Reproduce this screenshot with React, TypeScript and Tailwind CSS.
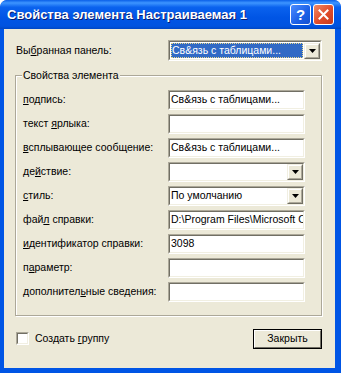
import { ReactNode } from "react";

const Field = ({ children, className = "" }: { children?: ReactNode; className?: string }) => (
    <div className={"border border-[#aca899] border-r-white border-b-white " + className}>
        <div className="h-full border border-[#716f64] border-r-[#f1efe2] border-b-[#f1efe2] bg-white flex items-center overflow-hidden">
            {children}
        </div>
    </div>
);

const DropButton = () => (
    <div className="w-[16px] h-[16px] shrink-0 ml-auto border border-[#f1efe2] border-r-[#716f64] border-b-[#716f64] bg-[#ece9d8] flex items-center justify-center">
        <div className="w-full h-full border border-white border-r-[#aca899] border-b-[#aca899] flex items-center justify-center">
            <svg width="7" height="4" viewBox="0 0 7 4">
                <polygon points="0,0 7,0 3.5,4" fill="#000" />
            </svg>
        </div>
    </div>
);

const Row = ({ label, children }: { label: ReactNode; children: ReactNode }) => (
    <div className="flex items-center h-[20px]">
        <div className="w-[145px] shrink-0 whitespace-nowrap">{label}</div>
        {children}
    </div>
);

const Text = ({ value }: { value?: string }) => (
    <Field className="w-[137px] h-[20px]">
        <span className="pl-[1px] whitespace-nowrap">{value}</span>
    </Field>
);

const Combo = ({ value }: { value?: string }) => (
    <Field className="w-[137px] h-[20px]">
        <span className="pl-[1px] whitespace-nowrap">{value}</span>
        <DropButton />
    </Field>
);

export default function App() {
    return (
        <div className="w-[341px] h-[373px] bg-[#0055e5] rounded-t-[7px] flex flex-col text-[10.5px] text-black font-['Liberation_Sans',Arial,sans-serif] overflow-hidden">
            {/* title bar */}
            <div className="h-[29px] shrink-0 flex items-center pl-[7px] pr-[7px] rounded-t-[7px] bg-[linear-gradient(180deg,#0a5fe8_0%,#3d95ff_10%,#0a62ee_25%,#0055e5_60%,#0053e0_90%,#0046c4_100%)]">
                <span className="text-white font-bold text-[13px] [text-shadow:1px_1px_0_#0a1d6e] whitespace-nowrap">Свойства элемента Настраиваемая 1</span>
                <div className="ml-auto flex gap-[2px]">
                    <div className="w-[21px] h-[21px] rounded-[3px] border border-white bg-[linear-gradient(135deg,#4b8dff,#1a5fe6_60%,#1450d0)] flex items-center justify-center text-white font-bold text-[15px] leading-none">?</div>
                    <div className="w-[21px] h-[21px] rounded-[3px] border border-white bg-[linear-gradient(135deg,#f08a66,#e04c2a_55%,#c73a1c)] flex items-center justify-center">
                        <svg width="11" height="11" viewBox="0 0 11 11">
                            <path d="M1.5 1.5 L9.5 9.5 M9.5 1.5 L1.5 9.5" stroke="#fff" strokeWidth="2" strokeLinecap="square" />
                        </svg>
                    </div>
                </div>
            </div>

            {/* client area */}
            <div className="flex-1 ml-[4px] mr-[6px] mb-[5px] bg-[#ece9d8] pl-[11px] pr-[13px] flex flex-col">
                <div className="flex items-center mt-[11px] h-[21px]">
                    <div className="w-[153px] pl-[1px]">Вы<u>б</u>ранная панель:</div>
                    <Field className="w-[154px] h-[21px]">
                        <div className="flex-1 h-full p-[1px]">
                            <div className="h-full bg-[#316ac5] outline outline-1 outline-dotted outline-[#e8d88a] -outline-offset-1 text-white flex items-center pl-[1px] whitespace-nowrap">Св&amp;язь с таблицами...</div>
                        </div>
                        <DropButton />
                    </Field>
                </div>

                {/* group box */}
                <div className="relative mt-[14px] border border-[#aca899] shadow-[inset_1px_1px_0_#fff,1px_1px_0_#fff] pl-[7px] pt-[14px] pb-[13px] flex flex-col gap-[4px]">
                    <span className="absolute left-[6px] -top-[8px] bg-[#ece9d8] px-[1px] whitespace-nowrap">Свойства элемента</span>
                    <Row label={<><u>п</u>одпись:</>}><Text value="Св&язь с таблицами..." /></Row>
                    <Row label={<>текст <u>я</u>рлыка:</>}><Text /></Row>
                    <Row label={<><u>в</u>сплывающее сообщение:</>}><Text value="Св&язь с таблицами..." /></Row>
                    <Row label={<>де<u>й</u>ствие:</>}><Combo /></Row>
                    <Row label={<><u>с</u>тиль:</>}><Combo value="По умолчанию" /></Row>
                    <Row label={<>фай<u>л</u> справки:</>}><Text value="D:\Program Files\Microsoft Office" /></Row>
                    <Row label={<><u>и</u>дентификатор справки:</>}><Text value="3098" /></Row>
                    <Row label={<>п<u>а</u>раметр:</>}><Text /></Row>
                    <Row label={<>дополнител<u>ь</u>ные сведения:</>}><Text /></Row>
                </div>

                {/* bottom */}
                <div className="flex items-start mt-[13px]">
                    <div className="flex items-center mt-[2px] pl-[1px]">
                        <div className="w-[13px] h-[13px] border border-[#aca899] border-r-white border-b-white">
                            <div className="w-full h-full border border-[#716f64] border-r-[#f1efe2] border-b-[#f1efe2] bg-white" />
                        </div>
                        <span className="ml-[6px]">Создать <u>г</u>руппу</span>
                    </div>
                    <div className="ml-auto w-[69px] h-[20px] border border-black">
                        <div className="w-full h-full border border-white border-r-[#716f64] border-b-[#716f64] bg-[#ece9d8] flex items-center justify-center">Закрыть</div>
                    </div>
                </div>
            </div>
        </div>
    );
}
